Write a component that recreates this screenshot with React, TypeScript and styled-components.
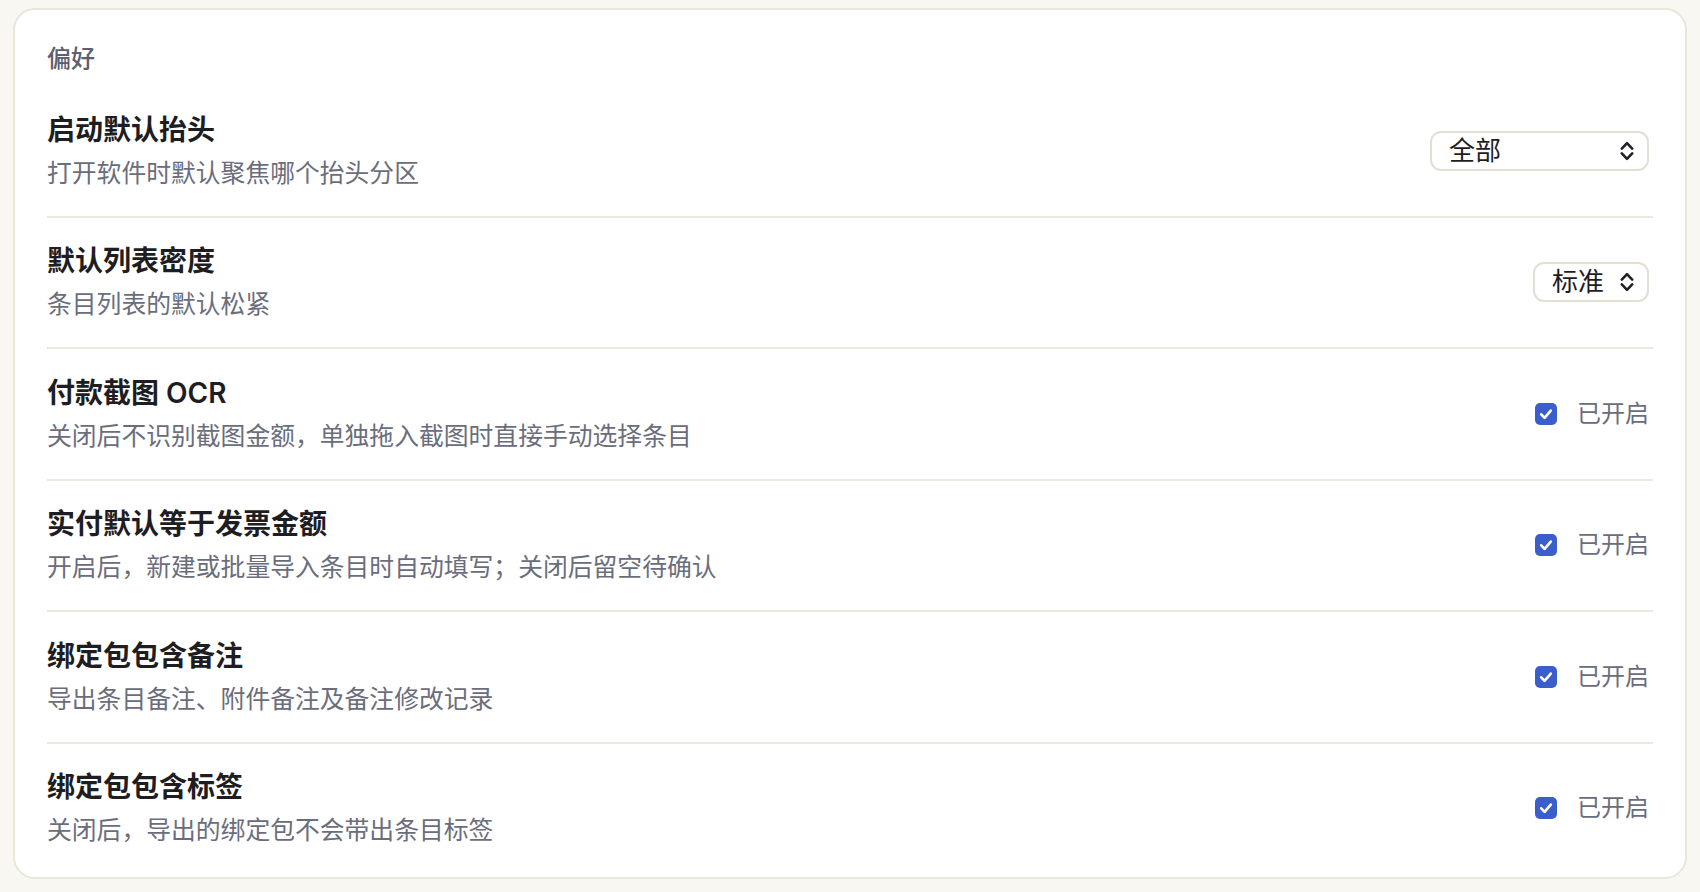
import React from "react";
import styled, { createGlobalStyle } from "styled-components";

const GlobalStyle = createGlobalStyle`
  html, body {
    margin: 0;
    padding: 0;
    background: #f8f7f2;
  }
  body {
    font-family: Inter, "Noto Sans CJK SC", "Noto Sans", sans-serif;
    -webkit-font-smoothing: antialiased;
  }
`;

const Page = styled.div`
  padding: 8px 13px 13px;
`;

const Card = styled.section`
  background: #ffffff;
  border: 2px solid #e9e6da;
  border-radius: 22px;
  padding: 31px 32px 4px;
`;

const Header = styled.h2`
  margin: 0 0 9px;
  font-size: 24px;
  line-height: 36px;
  font-weight: 500;
  color: #5c5f70;
`;

const Row = styled.div`
  display: flex;
  align-items: center;
  justify-content: space-between;
  padding: 22.75px 0;
  border-bottom: 2px solid #ebe8dd;
  &:last-child {
    border-bottom: none;
  }
`;

const Texts = styled.div`
  display: flex;
  flex-direction: column;
  gap: 2px;
`;

const Title = styled.div`
  font-size: 28px;
  line-height: 42px;
  font-weight: 600;
  color: #1d1d22;
`;

const Desc = styled.div`
  font-size: 24.8px;
  line-height: 40px;
  color: #6a6d7c;
`;

const Control = styled.div`
  display: flex;
  align-items: center;
  padding-right: 4px;
`;

const SelectBox = styled.div<{ $minWidth?: number }>`
  box-sizing: border-box;
  height: 40px;
  min-width: ${(p) => (p.$minWidth ? `${p.$minWidth}px` : "auto")};
  display: flex;
  align-items: center;
  justify-content: space-between;
  gap: 16px;
  padding: 0 13px 0 17px;
  border: 2px solid #e3dfd2;
  border-radius: 11px;
  background: #ffffff;
  font-size: 26px;
  line-height: 36px;
  color: #1d1d22;
`;

const Toggle = styled.label`
  display: flex;
  align-items: center;
  gap: 20px;
  font-size: 24px;
  line-height: 36px;
  color: #6a6d7c;
`;

const Box = styled.span`
  width: 22px;
  height: 22px;
  border-radius: 5px;
  background: #3a5fcd;
  display: flex;
  align-items: center;
  justify-content: center;
`;

const Chevrons = () => (
  <svg width="14" height="20" viewBox="0 0 14 20" fill="none">
    <path d="M1.8 7.6 L7 2.2 L12.2 7.6" stroke="#222226" strokeWidth="2.6" strokeLinecap="round" strokeLinejoin="round" />
    <path d="M1.8 12.4 L7 17.8 L12.2 12.4" stroke="#222226" strokeWidth="2.6" strokeLinecap="round" strokeLinejoin="round" />
  </svg>
);

const Check = () => (
  <Box>
    <svg width="22" height="22" viewBox="0 0 22 22" fill="none">
      <path d="M6.2 11.3 L9.6 14.8 L15.8 7.6" stroke="#ffffff" strokeWidth="2.6" strokeLinecap="round" strokeLinejoin="round" />
    </svg>
  </Box>
);

type Item =
  | { title: string; desc: string; kind: "select"; value: string; minWidth?: number }
  | { title: string; desc: string; kind: "check" };

const items: Item[] = [
  { title: "启动默认抬头", desc: "打开软件时默认聚焦哪个抬头分区", kind: "select", value: "全部", minWidth: 219 },
  { title: "默认列表密度", desc: "条目列表的默认松紧", kind: "select", value: "标准" },
  { title: "付款截图 OCR", desc: "关闭后不识别截图金额，单独拖入截图时直接手动选择条目", kind: "check" },
  { title: "实付默认等于发票金额", desc: "开启后，新建或批量导入条目时自动填写；关闭后留空待确认", kind: "check" },
  { title: "绑定包包含备注", desc: "导出条目备注、附件备注及备注修改记录", kind: "check" },
  { title: "绑定包包含标签", desc: "关闭后，导出的绑定包不会带出条目标签", kind: "check" },
];

export default function App() {
  return (
    <>
      <GlobalStyle />
      <Page>
        <Card>
          <Header>偏好</Header>
          {items.map((it) => (
            <Row key={it.title}>
              <Texts>
                <Title>{it.title}</Title>
                <Desc>{it.desc}</Desc>
              </Texts>
              <Control>
                {it.kind === "select" ? (
                  <SelectBox $minWidth={it.minWidth}>
                    <span>{it.value}</span>
                    <Chevrons />
                  </SelectBox>
                ) : (
                  <Toggle>
                    <Check />
                    <span>已开启</span>
                  </Toggle>
                )}
              </Control>
            </Row>
          ))}
        </Card>
      </Page>
    </>
  );
}
